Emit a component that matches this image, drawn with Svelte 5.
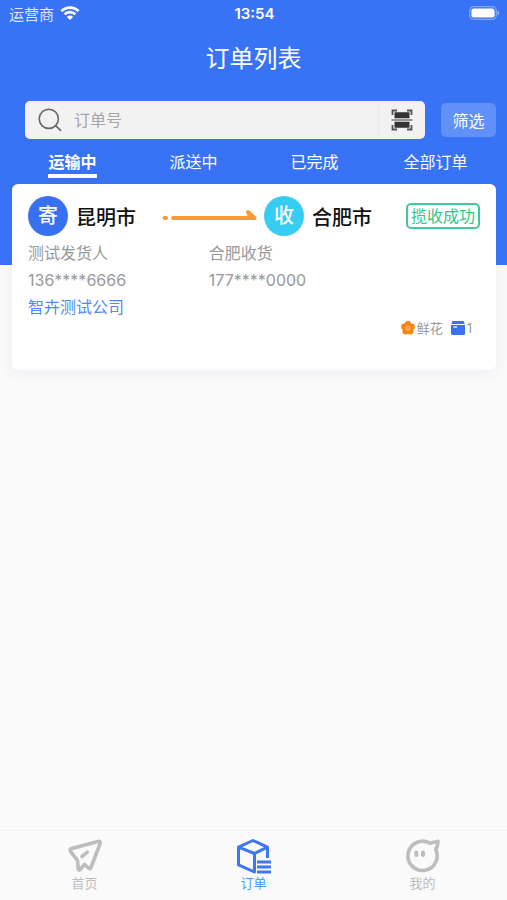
<script>
  const tabs = ['运输中', '派送中', '已完成', '全部订单'];
  let active = $state(0);
  let query = $state('');
</script>

<div class="page">
  <header>
    <div class="status">
      <span class="carrier">运营商
        <svg width="20" height="14" viewBox="0 0 20 14" fill="none" stroke="#fff" stroke-width="2.7">
          <path d="M1.4 5.1a12.3 12.3 0 0 1 17.2 0" />
          <path d="M4.6 8.3a7.7 7.7 0 0 1 10.8 0" />
          <path d="M10 14 6.9 10.9a4.4 4.4 0 0 1 6.2 0z" fill="#fff" stroke="none" />
        </svg>
      </span>
      <span class="time">13:54</span>
      <svg class="battery" width="31" height="14" viewBox="0 0 31 14">
        <rect x=".7" y=".7" width="26.6" height="12.6" rx="4" fill="none" stroke="#83a8fa" stroke-width="1.2" />
        <rect x="2.4" y="2.4" width="23.2" height="9.2" rx="2.4" fill="#fff" />
        <path d="M28.6 5v4q1.6-.5 1.6-2t-1.6-2" fill="#a5c0fc" />
      </svg>
    </div>
    <h1>订单列表</h1>
    <form class="tools" onsubmit={(e) => e.preventDefault()}>
      <div class="search">
        <svg width="24" height="24" viewBox="0 0 24 24" fill="none" stroke="#666" stroke-width="1.6" stroke-linecap="round">
          <circle cx="10.8" cy="10.8" r="9.6" />
          <path d="m17.8 17.8 4.8 4.6" />
        </svg>
        <input type="text" aria-label="订单号" placeholder="订单号" bind:value={query} />
        <button type="button" class="scan" aria-label="扫码">
          <svg width="22" height="22" viewBox="0 0 22 22" fill="none" stroke="#555" stroke-width="1.8">
            <path d="M1.5 6V1.5H6M16 1.5h4.5V6M20.5 16v4.5H16M6 20.5H1.5V16" />
            <path d="M3.5 3.3h15v5.9h-15zM3.5 12.8h15v5.9h-15z" fill="#333" stroke="none" />
            <path d="M.5 11h21" stroke="#777" stroke-width="1.5" />
          </svg>
        </button>
      </div>
      <button type="button" class="filter">筛选</button>
    </form>
    <nav class="tabs">
      {#each tabs as tab, i}
        <button type="button" class:active={active === i} onclick={() => (active = i)}>{tab}</button>
      {/each}
    </nav>
  </header>

  <main>
    <article class="card">
      <div class="route">
        <span class="dot send">寄</span>
        <strong>昆明市</strong>
        <svg class="arrow" width="95" height="14" viewBox="0 0 95 14" fill="none" stroke="#fb9a34" stroke-width="4" stroke-linecap="round" stroke-linejoin="round">
          <path d="M2.5 9H4M11 9h81.500l-6.500-6" />
          <path d="M86 5.500 91.500 9H87z" fill="#fb9a34" stroke-width="2" />
        </svg>
        <span class="dot receive">收</span>
        <strong>合肥市</strong>
        <span class="badge">揽收成功</span>
      </div>
      <div class="people">
        <div><p>测试发货人</p><p>136****6666</p></div>
        <div><p>合肥收货</p><p>177****0000</p></div>
      </div>
      <p class="company">智卉测试公司</p>
      <div class="goods">
        <svg width="14" height="14" viewBox="0 0 14 14">
          <g fill="#f98510">
            <circle cx="7" cy="3.3" r="3.2" /><circle cx="10.6" cy="5.8" r="3.2" /><circle cx="9.3" cy="10.2" r="3.2" />
            <circle cx="4.7" cy="10.2" r="3.2" /><circle cx="3.4" cy="5.8" r="3.2" /><circle cx="7" cy="7.5" r="4" />
          </g>
          <path d="m7 4.700 2.200 1.600-.8 2.600H5.600l-.8-2.600z" fill="none" stroke="#ffc98f" stroke-width=".9" />
          <circle cx="7" cy="7" r=".6" fill="#ffe1be" />
        </svg>
        <span>鲜花</span>
        <svg class="box" width="14" height="14" viewBox="0 0 14 14" fill="#3873f4">
          <path d="M2 0h10q.8 0 1 .8L13.6 3H.4L1 .8Q1.2 0 2 0M0 4h14v8.500q0 1.500-1.500 1.500h-11Q0 14 0 12.500z" />
          <path d="M2.500 6h3.500" stroke="#fff" stroke-width="1.3" />
        </svg>
        <span>1</span>
      </div>
    </article>
  </main>

  <nav class="bottom">
    <a href="#home">
      <svg width="36" height="36" viewBox="0 0 36 36" fill="none" stroke="#bdbdbd" stroke-width="3.6" stroke-linejoin="round" stroke-linecap="round">
        <path d="M3.800 10.800 31 3.500q3-.6 2 2.300L24 29.500q-1 2-2.500.5l-4-3.500-4.200 5q-1.500 1.500-2-.5l-.8-8.500-7-9.200q-1-1.800.3-2.500z" />
        <path d="m15 18.500 5.300-4.300" />
      </svg>
      <span>首页</span>
    </a>
    <a href="#orders" class="current">
      <svg width="36" height="36" viewBox="0 0 36 36" fill="none" stroke="#3f77ef" stroke-width="3" stroke-linejoin="round">
        <path d="M31.5 20V9.2L17 2.5 2.5 9.2v17.600L18.500 34V15.500L2.500 9.200M18.500 15.500l13-6.300" />
        <path d="M21 24h14M21 29h14M21 34h14" stroke-width="2.8" />
      </svg>
      <span>订单</span>
    </a>
    <a href="#me">
      <svg width="36" height="36" viewBox="0 0 36 36" fill="none" stroke="#bdbdbd" stroke-width="3.6" stroke-linejoin="round" stroke-linecap="round">
        <path d="M25 5.300Q29 4.500 33 3.300q-.3 5.200-2.300 8.200A14.600 14.600 0 1 1 25 5.300" />
        <path d="M11.300 14.500v2.500M18 14.500v2.500" stroke-width="4" />
      </svg>
      <span>我的</span>
    </a>
  </nav>
</div>

<style>
  :global(body) { margin: 0; background: #fafafa; }
  .page {
    min-height: 100vh;
    display: flex;
    flex-direction: column;
    font-family: Inter, "Noto Sans CJK SC", sans-serif;
    font-size: 16px;
    color: #999;
    background: #fafafa;
  }
  svg { flex: none; display: block; }
  p, h1 { margin: 0; }
  button { font: inherit; border: 0; padding: 0; background: none; color: inherit; cursor: pointer; }
  header { background: #3873f6; color: #fff; padding-bottom: 81px; }
  .status {
    display: grid;
    grid-template-columns: 1fr auto 1fr;
    align-items: center;
    height: 26px;
    padding: 0 7px 0 9px;
  }
  .carrier { display: flex; align-items: center; gap: 6px; font-size: 15px; color: #dce7ff; }
  .time { font-size: 15px; font-weight: 600; }
  .battery { justify-self: end; }
  h1 { font-size: 24px; line-height: 36px; font-weight: 400; text-align: center; padding: 15px 0 24px; }
  .tools { display: flex; align-items: center; gap: 16px; padding: 0 11px 0 25px; }
  .search {
    flex: 1;
    min-width: 0;
    display: flex;
    align-items: center;
    height: 38px;
    box-sizing: border-box;
    padding-left: 13px;
    border-radius: 5px;
    background: #f2f2f2;
  }
  .search input {
    flex: 1;
    min-width: 0;
    border: 0;
    outline: 0;
    padding: 0 12px;
    background: none;
    font: inherit;
    color: #555;
  }
  .search input::placeholder { color: #a5a5a5; opacity: 1; }
  .scan { width: 47px; height: 32px; display: flex; align-items: center; justify-content: center; border-left: 1px solid #e9e9e9; }
  .filter { width: 55px; height: 34px; border-radius: 5px; background: #6090f8; }
  .tabs { display: grid; grid-template-columns: repeat(4, 1fr); padding: 11px 11px 6px 12px; }
  .tabs button { justify-self: center; height: 28px; line-height: 24px; border-bottom: 4px solid transparent; }
  .tabs .active { font-weight: 700; border-color: #fff; }
  main { flex: 1; padding: 0 11px 0 12px; }
  .card {
    margin-top: -81px;
    min-height: 186px;
    box-sizing: border-box;
    padding: 11px 16px;
    border-radius: 6px;
    background: #fff;
    box-shadow: 0 2px 16px rgba(60, 90, 150, 0.08);
  }
  .route { display: flex; align-items: center; height: 42px; }
  .dot {
    flex: none;
    width: 40px;
    height: 40px;
    border-radius: 50%;
    line-height: 40px;
    text-align: center;
    font-size: 20px;
    font-weight: 500;
    color: #fff;
  }
  .send { background: #3870f2; }
  .receive { background: #37cdf3; }
  strong { margin-left: 8px; font-size: 20px; font-weight: 500; color: #111; white-space: nowrap; }
  .arrow { margin: 0 7px 0 26px; }
  .badge {
    margin-left: auto;
    padding: 0 3px;
    border: 2px solid #3fc995;
    border-radius: 5px;
    line-height: 22px;
    color: #2fc58b;
    white-space: nowrap;
  }
  .people { display: grid; grid-template-columns: 2fr 3fr; line-height: 27px; padding-top: 3px; }
  .people p { white-space: nowrap; }
  .company { line-height: 27px; color: #5088f6; }
  .goods { display: flex; align-items: center; justify-content: flex-end; gap: 2px; padding-right: 8px; font-size: 13px; line-height: 14px; }
  .box { margin-left: 6px; }
  .bottom {
    display: grid;
    grid-template-columns: repeat(3, 1fr);
    height: 69px;
    border-top: 1px solid #f1f1f1;
    background: #fafafa;
  }
  .bottom a {
    display: flex;
    flex-direction: column;
    align-items: center;
    padding-top: 7px;
    font-size: 13px;
    line-height: 19px;
    color: #bdbdbd;
    text-decoration: none;
  }
  .bottom .current { color: #439cf0; }
</style>
